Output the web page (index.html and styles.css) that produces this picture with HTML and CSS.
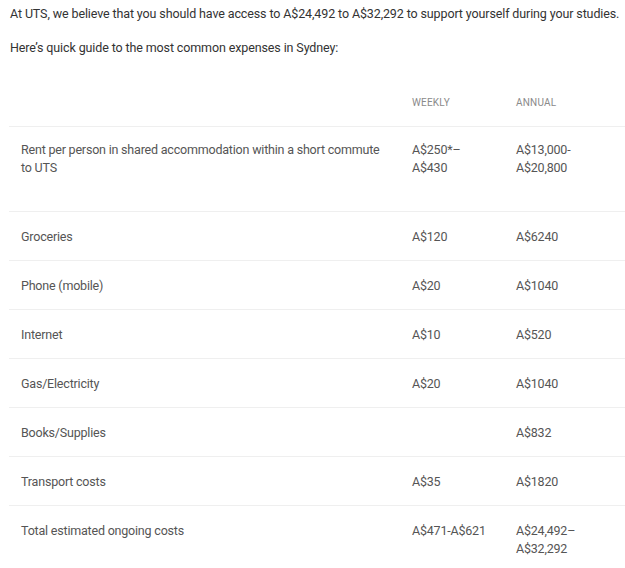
FILE: index.html
```html
<!DOCTYPE html>
<html lang="en">
<head>
<meta charset="utf-8">
<title>Living costs</title>
<link rel="stylesheet" href="styles.css">
</head>
<body>
<div class="page">
  <p class="intro">At UTS, we believe that you should have access to A$24,492 to A$32,292 to support yourself during your studies.</p>
  <p class="intro">Here’s quick guide to the most common expenses in Sydney:</p>
  <div class="table">
    <div class="row head">
      <div class="cell label"></div>
      <div class="cell">WEEKLY</div>
      <div class="cell">ANNUAL</div>
    </div>
    <div class="row tall">
      <div class="cell label">Rent per person in shared accommodation within a short commute<br>to UTS</div>
      <div class="cell">A$250*–<br>A$430</div>
      <div class="cell">A$13,000-<br>A$20,800</div>
    </div>
    <div class="row">
      <div class="cell label">Groceries</div>
      <div class="cell">A$120</div>
      <div class="cell">A$6240</div>
    </div>
    <div class="row">
      <div class="cell label">Phone (mobile)</div>
      <div class="cell">A$20</div>
      <div class="cell">A$1040</div>
    </div>
    <div class="row">
      <div class="cell label">Internet</div>
      <div class="cell">A$10</div>
      <div class="cell">A$520</div>
    </div>
    <div class="row">
      <div class="cell label">Gas/Electricity</div>
      <div class="cell">A$20</div>
      <div class="cell">A$1040</div>
    </div>
    <div class="row">
      <div class="cell label">Books/Supplies</div>
      <div class="cell"></div>
      <div class="cell">A$832</div>
    </div>
    <div class="row">
      <div class="cell label">Transport costs</div>
      <div class="cell">A$35</div>
      <div class="cell">A$1820</div>
    </div>
    <div class="row last">
      <div class="cell label">Total estimated ongoing costs</div>
      <div class="cell">A$471-A$621</div>
      <div class="cell">A$24,492–<br>A$32,292</div>
    </div>
  </div>
</div>
</body>
</html>
```
FILE: styles.css
```css
html, body {
  margin: 0;
  padding: 0;
  background: #ffffff;
}

.page {
  padding: 5px 0 0 10px;
  font-family: Roboto, "Liberation Sans", Arial, sans-serif;
  font-size: 12.5px;
  line-height: 18px;
  color: #333333;
}

.intro {
  margin: 0 0 16px 0;
  letter-spacing: -0.12px;
}

.table {
  margin-top: 36px;
  margin-left: -1px;
}

.row {
  display: grid;
  grid-template-columns: 403px 104px 1fr;
  border-top: 1px solid #efefef;
  color: #555555;
  letter-spacing: -0.2px;
}

.cell {
  padding-top: 16px;
  padding-bottom: 14px;
}

.label {
  padding-left: 12px;
}

.row.head {
  border-top: none;
  font-size: 10px;
  color: #8a8a8a;
  letter-spacing: 0.2px;
}

.row.head .cell {
  padding-top: 1px;
  padding-bottom: 14px;
}

.row.tall .cell {
  padding-top: 14px;
  padding-bottom: 34px;
}

.row.last .cell {
  padding-bottom: 10px;
}
```
